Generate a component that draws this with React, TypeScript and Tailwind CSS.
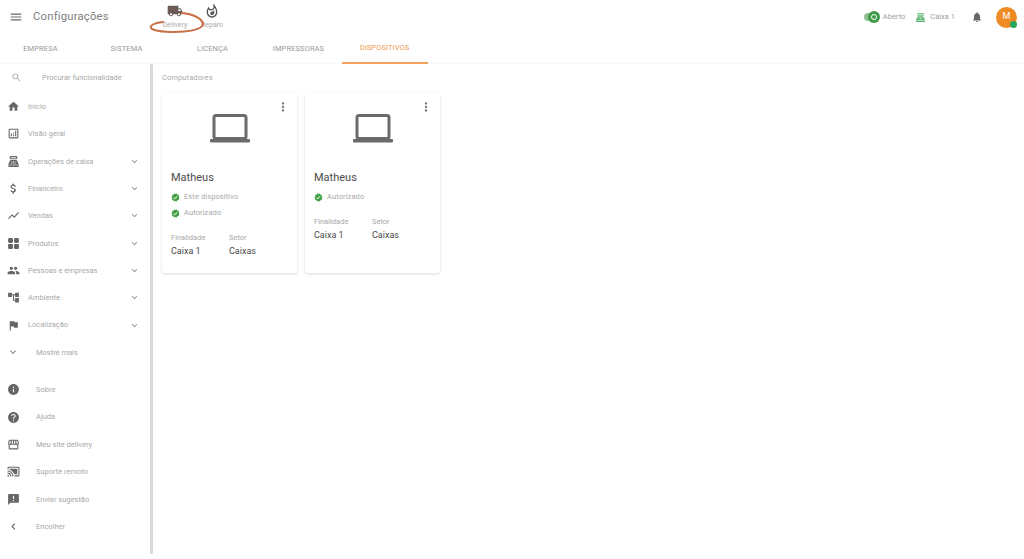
import React from "react";
import {
  MdMenu, MdSearch, MdHome, MdOutlineAnalytics, MdPointOfSale, MdAttachMoney, MdShowChart,
  MdPeople, MdAccountTree, MdFlag, MdExpandMore, MdInfo, MdHelp, MdOutlineStorefront, MdCastConnected,
  MdAnnouncement, MdChevronLeft, MdMoreVert, MdVerified, MdNotifications, MdLocalShipping,
  MdOutlineWhatshot,
} from "react-icons/md";

const tabs = ["EMPRESA", "SISTEMA", "LICENÇA", "IMPRESSORAS", "DISPOSITIVOS"];

function ProductsIcon({ className }: { className?: string }) {
  return (
    <svg className={className} viewBox="0 0 24 24" fill="currentColor">
      <rect x="2" y="2" width="9" height="9" rx="2.5" />
      <rect x="13" y="2" width="9" height="9" rx="2.5" />
      <rect x="2" y="13" width="9" height="9" rx="1.5" />
      <rect x="13" y="13" width="9" height="9" rx="1.5" />
    </svg>
  );
}

function LaptopIcon() {
  return (
    <svg width="40" height="29" viewBox="0 0 40 29" fill="none" className="text-[#6b6b6b]">
      <rect x="4" y="1.5" width="32" height="23" rx="2" stroke="currentColor" strokeWidth="3" />
      <rect x="0" y="25" width="40" height="3.5" rx="1" fill="currentColor" />
    </svg>
  );
}

const mainItems: [React.ComponentType<{ className?: string }>, string, boolean][] = [
  [MdHome, "Início", false],
  [MdOutlineAnalytics, "Visão geral", false],
  [MdPointOfSale, "Operações de caixa", true],
  [MdAttachMoney, "Financeiro", true],
  [MdShowChart, "Vendas", true],
  [ProductsIcon, "Produtos", true],
  [MdPeople, "Pessoas e empresas", true],
  [MdAccountTree, "Ambiente", true],
  [MdFlag, "Localização", true],
];

const bottomItems: [React.ComponentType<{ className?: string }>, string][] = [
  [MdInfo, "Sobre"],
  [MdHelp, "Ajuda"],
  [MdOutlineStorefront, "Meu site delivery"],
  [MdCastConnected, "Suporte remoto"],
  [MdAnnouncement, "Enviar sugestão"],
  [MdChevronLeft, "Encolher"],
];

function Check({ text }: { text: string }) {
  return (
    <div className="flex h-[16px] items-center gap-[4px]">
      <MdVerified className="h-[9px] w-[9px] text-[#43a047]" />
      <span className="text-[7.5px] tracking-[0.1px] text-[#a8a8a8]">{text}</span>
    </div>
  );
}

function Card({ checks }: { checks: string[] }) {
  return (
    <div className="relative flex h-[180px] w-[135px] flex-col rounded-[3px] bg-white px-[9px] shadow-[0_1px_3px_rgba(0,0,0,0.15)]">
      <MdMoreVert className="absolute right-[7px] top-[7px] h-[14px] w-[14px] text-[#777]" />
      <div className="flex h-[50px] items-end justify-center">
        <LaptopIcon />
      </div>
      <div className="mt-[26px] h-[17px] text-[11px] leading-[17px] text-[#4a4a4a]">Matheus</div>
      <div className="mt-[3px] flex flex-col">
        {checks.map((c) => (
          <Check key={c} text={c} />
        ))}
      </div>
      <div className="mt-[10px] flex">
        <div className="w-[58px]">
          <div className="h-[13px] text-[7.5px] leading-[13px] text-[#a8a8a8]">Finalidade</div>
          <div className="text-[9px] leading-[14px] text-[#4a4a4a]">Caixa 1</div>
        </div>
        <div>
          <div className="h-[13px] text-[7.5px] leading-[13px] text-[#a8a8a8]">Setor</div>
          <div className="text-[9px] leading-[14px] text-[#4a4a4a]">Caixas</div>
        </div>
      </div>
    </div>
  );
}

export default function App() {
  return (
    <div className="flex h-[559px] w-[1024px] flex-col overflow-hidden bg-white font-['Roboto',sans-serif]">
      <header className="relative flex h-[34px] shrink-0 items-center">
        <MdMenu className="ml-[9px] h-[14px] w-[14px] text-[#666]" />
        <h1 className="ml-[10px] w-[75px] whitespace-nowrap text-[11.3px] tracking-[0.2px] text-[#808080]">Configurações</h1>
        <div className="ml-[47px] flex h-full items-start pt-[3px]">
          <div className="flex w-[40px] flex-col items-center">
            <MdLocalShipping className="h-[16px] w-[16px] text-[#6b5a55]" />
            <span className="mt-[2px] text-[7px] leading-[9px] text-[#aaa]">Delivery</span>
          </div>
          <div className="ml-[2px] flex w-[30px] flex-col items-center">
            <MdOutlineWhatshot className="h-[16px] w-[16px] text-[#555]" />
            <span className="mt-[2px] text-[7px] leading-[9px] text-[#aaa]">Reparo</span>
          </div>
        </div>
        <svg className="absolute left-[148px] top-[8px]" width="62" height="26" viewBox="0 0 62 26" fill="none">
          <path
            d="M34 5 C44 6 52 9 55 15 C56 20 46 23 36 23.5 C26 24.5 10 24 4 21 C0 18 6 15 15 14"
            stroke="#c9714a"
            strokeWidth="2"
            strokeLinecap="round"
          />
        </svg>
        <div className="ml-auto flex items-center pr-[7px]">
          <div className="relative h-[8px] w-[15px] rounded-full bg-[#8fbf92]">
            <div className="absolute right-[-1px] top-[-2px] flex h-[12px] w-[12px] items-center justify-center rounded-full bg-[#3f9a4a]">
              <div className="h-[6px] w-[6px] rounded-full border border-white" />
            </div>
          </div>
          <span className="ml-[4px] text-[7.5px] text-[#a0a0a0]">Aberto</span>
          <MdPointOfSale className="ml-[10px] h-[11px] w-[11px] text-[#5cb270]" />
          <span className="ml-[4px] text-[7.5px] text-[#a0a0a0]">Caixa 1</span>
          <MdNotifications className="ml-[16px] h-[12px] w-[12px] text-[#666]" />
          <div className="relative ml-[13px] flex h-[21px] w-[21px] items-center justify-center rounded-full bg-[#ef8b25] text-[9px] text-white">
            M
            <div className="absolute bottom-[0px] right-[0px] h-[7px] w-[7px] rounded-full bg-[#26a65b]" />
          </div>
        </div>
      </header>

      <nav className="ml-[-2.5px] flex h-[30px] shrink-0 border-b border-[#f8f8f8]">
        {tabs.map((t) => {
          const active = t === "DISPOSITIVOS";
          return (
            <div
              key={t}
              className={
                active
                  ? "flex h-[30px] w-[86px] items-center justify-center border-b-2 border-[#f0a35e] text-[7.5px] tracking-[0.1px] text-[#ef9a4f]"
                  : "flex h-[30px] w-[86px] items-center justify-center text-[7.5px] tracking-[0.1px] text-[#9a9a9a]"
              }
            >
              {t}
            </div>
          );
        })}
      </nav>

      <div className="flex min-h-0 flex-1">
        <aside className="relative w-[154px] shrink-0 overflow-hidden">
          <div className="mr-[5px] flex flex-col">
            <div className="flex h-[27px] items-center pl-[11px]">
              <MdSearch className="h-[11px] w-[11px] text-[#aaa]" />
              <span className="ml-[20px] text-[7.5px] text-[#a8a8a8]">Procurar funcionalidade</span>
            </div>
            <div className="mt-[2px] flex flex-col">
              {mainItems.map(([Icon, label, hasChevron]) => (
                <div key={label} className="flex h-[27.3px] items-center pl-[7px] pr-[9px]">
                  <Icon className="h-[13px] w-[13px] text-[#666]" />
                  <span className="ml-[8px] text-[7.5px] text-[#a8a8a8]">{label}</span>
                  {hasChevron && <MdExpandMore className="ml-auto h-[11px] w-[11px] text-[#888]" />}
                </div>
              ))}
              <div className="flex h-[27.3px] items-center pl-[7px]">
                <MdExpandMore className="h-[12px] w-[12px] text-[#888]" />
                <span className="ml-[17px] text-[7.5px] text-[#a8a8a8]">Mostre mais</span>
              </div>
            </div>
            <div className="mt-[10px] flex flex-col">
              {bottomItems.map(([Icon, label]) => (
                <div key={label} className="flex h-[27.4px] items-center pl-[7px]">
                  <Icon className="h-[13px] w-[13px] text-[#666]" />
                  <span className="ml-[16px] text-[7.5px] text-[#a8a8a8]">{label}</span>
                </div>
              ))}
            </div>
          </div>
          <div className="absolute bottom-[5px] right-[1px] top-[0px] w-[3px] rounded-full bg-[#d9d9d9]" />
        </aside>

        <main className="flex-1 pl-[8px]">
          <div className="flex h-[27px] items-center text-[7.5px] tracking-[0.1px] text-[#aaa]">Computadores</div>
          <div className="mt-[2px] flex items-start gap-[8px]">
            <Card checks={["Este dispositivo", "Autorizado"]} />
            <Card checks={["Autorizado"]} />
          </div>
        </main>
      </div>
    </div>
  );
}
